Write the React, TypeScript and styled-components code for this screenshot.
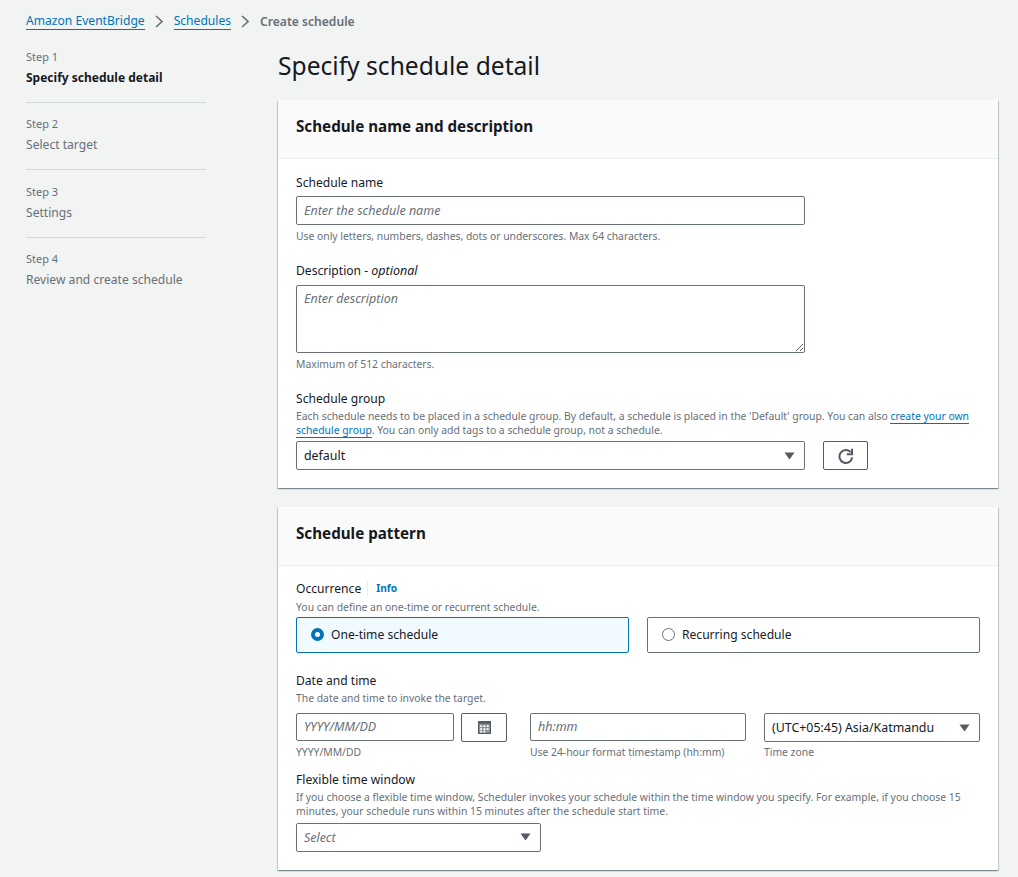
import React from 'react'
import styled, { createGlobalStyle } from 'styled-components'

const GlobalStyle = createGlobalStyle`
  html, body {
    margin: 0;
    padding: 0;
    height: 877px;
    overflow: hidden;
    background: #f2f3f3;
    font-family: "Noto Sans", "Open Sans", sans-serif;
    color: #16191f;
  }
  * { box-sizing: border-box; }
`

const steps = [
  { step: 'Step 1', title: 'Specify schedule detail', active: true },
  { step: 'Step 2', title: 'Select target' },
  { step: 'Step 3', title: 'Settings' },
  { step: 'Step 4', title: 'Review and create schedule' },
]

const calendarCells = [
  [2, 4], [5, 4], [8, 4],
  [2, 6.6], [5, 6.6], [8, 6.6],
  [2, 9], [5, 9],
]

const CaretIcon = () => (
  <svg width="11" height="8" viewBox="0 0 11 8">
    <path d="M0.5 0.5h10L5.5 7.5z" fill="#545b64" />
  </svg>
)

const RefreshIcon = () => (
  <svg width="16" height="16" viewBox="0 0 16 16" fill="none" stroke="#545b64" strokeWidth="2">
    <path d="M14.2 9.4A6.4 6.4 0 1 1 12.6 4.2" />
    <path d="M14 0.8v5.4H8.8" />
  </svg>
)

const CalendarIcon = () => (
  <svg width="13" height="13" viewBox="0 0 12 12">
    <rect x="0.5" y="0.5" width="11" height="11" fill="#879196" stroke="#545b64" />
    <rect x="0" y="0" width="12" height="2.5" fill="#545b64" />
    {calendarCells.map(([x, y]) => (
      <rect key={`${x}-${y}`} x={x} y={y} width="1.8" height="1.6" fill="#fff" />
    ))}
  </svg>
)

const Separator = () => (
  <Chevron viewBox="0 0 8 13" fill="none">
    <path d="M1 1l6 5.5L1 12" stroke="#687078" strokeWidth="1.6" />
  </Chevron>
)

const App = () => {
  return (
    <Page>
      <GlobalStyle />
      <Breadcrumbs>
        <Link>Amazon EventBridge</Link>
        <Separator />
        <Link>Schedules</Link>
        <Separator />
        <Current>Create schedule</Current>
      </Breadcrumbs>
      <Columns>
        <StepNav>
          {steps.map(s => (
            <StepItem key={s.step}>
              <StepLabel>{s.step}</StepLabel>
              <StepTitle $active={s.active}>{s.title}</StepTitle>
            </StepItem>
          ))}
        </StepNav>
        <Main>
          <PageTitle>Specify schedule detail</PageTitle>
          <Panel>
            <PanelHeader>Schedule name and description</PanelHeader>
            <PanelBody>
              <Field $mb={17}>
                <Label $mb={4}>Schedule name</Label>
                <TextInput placeholder="Enter the schedule name" readOnly />
                <Hint>Use only letters, numbers, dashes, dots or underscores. Max 64 characters.</Hint>
              </Field>
              <Field $mb={17}>
                <Label $mb={5}>
                  Description - <em>optional</em>
                </Label>
                <TextArea placeholder="Enter description" readOnly />
                <Hint>Maximum of 512 characters.</Hint>
              </Field>
              <Field>
                <Label>Schedule group</Label>
                <Description>
                  Each schedule needs to be placed in a schedule group. By default, a schedule is placed in the
                  'Default' group. You can also <InlineLink>create your own schedule group</InlineLink>. You can only
                  add tags to a schedule group, not a schedule.
                </Description>
                <SelectRow>
                  <Select $width={509}>
                    default
                    <CaretIcon />
                  </Select>
                  <IconButton $width={45}>
                    <RefreshIcon />
                  </IconButton>
                </SelectRow>
              </Field>
            </PanelBody>
          </Panel>
          <Panel>
            <PanelHeader>Schedule pattern</PanelHeader>
            <PanelBody>
              <Field $mb={17}>
                <LabelRow>
                  <Label>Occurrence</Label>
                  <InfoLink>Info</InfoLink>
                </LabelRow>
                <Description>You can define an one-time or recurrent schedule.</Description>
                <Tiles>
                  <Tile $selected>
                    <Radio $selected />
                    One-time schedule
                  </Tile>
                  <Tile>
                    <Radio />
                    Recurring schedule
                  </Tile>
                </Tiles>
              </Field>
              <Field $mb={10}>
                <Label>Date and time</Label>
                <Description>The date and time to invoke the target.</Description>
                <DateGrid>
                  <div>
                    <DateInputs>
                      <TextInput placeholder="YYYY/MM/DD" readOnly $height={28} />
                      <IconButton $width={46}>
                        <CalendarIcon />
                      </IconButton>
                    </DateInputs>
                    <Hint>YYYY/MM/DD</Hint>
                  </div>
                  <div>
                    <InputSlot>
                      <TextInput placeholder="hh:mm" readOnly $height={28} />
                    </InputSlot>
                    <Hint>Use 24-hour format timestamp (hh:mm)</Hint>
                  </div>
                  <div>
                    <InputSlot>
                      <Select $height={29}>
                        (UTC+05:45) Asia/Katmandu
                        <CaretIcon />
                      </Select>
                    </InputSlot>
                    <Hint>Time zone</Hint>
                  </div>
                </DateGrid>
              </Field>
              <Field>
                <Label>Flexible time window</Label>
                <Description>
                  If you choose a flexible time window, Scheduler invokes your schedule within the time window you
                  specify. For example, if you choose 15 minutes, your schedule runs within 15 minutes after the
                  schedule start time.
                </Description>
                <Select $width={245} $mt={5} $placeholder>
                  Select
                  <CaretIcon />
                </Select>
              </Field>
            </PanelBody>
          </Panel>
        </Main>
      </Columns>
    </Page>
  )
}

export default App

const Page = styled.div`
  width: 1018px;
  height: 877px;
  overflow: hidden;
  padding: 12px 20px 0 26px;
  font-size: 12.1px;
`

const Breadcrumbs = styled.nav`
  display: flex;
  align-items: center;
  height: 18px;
  font-size: 12.1px;
`

const Link = styled.a`
  color: #0073bb;
  border-bottom: 1px solid #0073bb;
  padding-top: 1px;
  line-height: 16px;
`

const Chevron = styled.svg`
  flex: none;
  width: 8px;
  height: 13px;
  margin: 1px 11px 0 10px;
`

const Current = styled.span`
  color: #687078;
  font-weight: 600;
`

const Columns = styled.div`
  display: flex;
  margin-top: 16px;
`

const StepNav = styled.div`
  width: 180px;
  margin-right: 72px;
  padding-top: 3px;
`

const StepItem = styled.div`
  padding-bottom: 13.5px;
  border-bottom: 1px solid #d5dbdb;

  & + & {
    padding-top: 13.4px;
    padding-bottom: 14.3px;
  }

  &:last-child {
    border-bottom: 0;
  }
`

const StepLabel = styled.div`
  font-size: 11px;
  line-height: 15px;
  color: #687078;
`

const StepTitle = styled.div<{ $active?: boolean }>`
  margin-top: 4px;
  font-size: ${p => (p.$active ? 12 : 12.1)}px;
  line-height: 20px;
  font-weight: ${p => (p.$active ? 700 : 400)};
  color: ${p => (p.$active ? '#16191f' : '#687078')};
`

const Main = styled.main`
  width: 720px;
`

const PageTitle = styled.h1`
  margin: 0 0 14px;
  font-size: 24.6px;
  line-height: 40px;
  font-weight: 400;
  color: #16191f;
  height: 40px;
`

const Panel = styled.section`
  background: #fff;
  box-shadow: 0 1px 1px 0 rgba(0, 28, 36, 0.3), 1px 1px 1px 0 rgba(0, 28, 36, 0.15), -1px 1px 1px 0 rgba(0, 28, 36, 0.15);
  margin-bottom: 19px;
`

const PanelHeader = styled.h2`
  margin: 0;
  height: 59px;
  padding: 0 18px 6px;
  display: flex;
  align-items: center;
  background: #fafafa;
  border-bottom: 1px solid #eaeded;
  font-size: 15.2px;
  font-weight: 700;
`

const PanelBody = styled.div`
  padding: 13px 18px 18px;
`

const Field = styled.div<{ $mb?: number }>`
  margin-bottom: ${p => p.$mb ?? 0}px;
`

const Label = styled.div<{ $mb?: number }>`
  font-size: 12.1px;
  line-height: 22px;
  color: #16191f;
  height: 20px;
  margin-bottom: ${p => p.$mb ?? 0}px;

  em {
    font-size: 12.5px;
  }
`

const LabelRow = styled.div`
  display: flex;
  align-items: center;
  margin: -1px 0 2px;
`

const InfoLink = styled.a`
  margin-left: 6px;
  padding-left: 8px;
  border-left: 1px solid #eaeded;
  color: #0073bb;
  font-size: 10.2px;
  font-weight: 700;
  line-height: 15px;
`

const Description = styled.div`
  font-size: 10.38px;
  line-height: 14px;
  color: #687078;
  margin: 1px 0 4px;
`

const InlineLink = styled.a`
  color: #0073bb;
  border-bottom: 1px solid #0073bb;
`

const Hint = styled.div`
  font-size: 10.35px;
  line-height: 14px;
  margin-top: 4px;
  color: #687078;
`

const inputBase = `
  display: block;
  border: 1px solid #687078;
  border-radius: 2px;
  background: #fff;
  padding: 0 7px;
  font-family: "Noto Sans", "Open Sans", sans-serif;
  font-size: 12.5px;
  color: #16191f;
  outline: none;

  &::placeholder {
    color: #687078;
    font-style: italic;
    opacity: 1;
  }
`

const TextInput = styled.input<{ $height?: number }>`
  ${inputBase}
  width: ${p => (p.$height ? '100%' : '509px')};
  min-width: 0;
  height: ${p => p.$height ?? 29}px;
  padding-bottom: ${p => (p.$height ? 2 : 0)}px;
`

const InputSlot = styled.div`
  height: 28px;
`

const TextArea = styled.textarea`
  ${inputBase}
  width: 509px;
  height: 68px;
  padding-top: 4px;
  line-height: 18px;
`

const Select = styled.div<{ $width?: number; $height?: number; $mt?: number; $placeholder?: boolean }>`
  display: flex;
  align-items: center;
  justify-content: space-between;
  width: ${p => (p.$width ? `${p.$width}px` : '100%')};
  height: ${p => p.$height ?? 29}px;
  margin-top: ${p => p.$mt ?? 0}px;
  padding: 0 9px ${p => (p.$placeholder ? 1 : 0)}px 7px;
  border: 1px solid #687078;
  border-radius: 2px;
  background: #fff;
  font-size: 12.4px;
  white-space: nowrap;
  color: ${p => (p.$placeholder ? '#687078' : '#16191f')};
  font-style: ${p => (p.$placeholder ? 'italic' : 'normal')};
`

const SelectRow = styled.div`
  display: flex;
  gap: 18px;
`

const IconButton = styled.button<{ $width: number }>`
  display: flex;
  align-items: center;
  justify-content: center;
  flex: none;
  width: ${p => p.$width}px;
  height: 29px;
  padding: 0;
  border: 1px solid #545b64;
  border-radius: 2px;
  background: #fff;
`

const Tiles = styled.div`
  display: grid;
  grid-template-columns: 333px 333px;
  gap: 18px;
  margin-top: -1px;
`

const Tile = styled.div<{ $selected?: boolean }>`
  display: flex;
  align-items: center;
  gap: 7px;
  height: 36px;
  padding: 0 14px 1px;
  border: 1px solid ${p => (p.$selected ? '#0073bb' : '#687078')};
  border-radius: 2px;
  background: ${p => (p.$selected ? '#f1faff' : '#fff')};
  font-size: 12.1px;
`

const Radio = styled.span<{ $selected?: boolean }>`
  width: 13px;
  height: 13px;
  border-radius: 50%;
  background: #fff;
  border: ${p => (p.$selected ? '4px solid #0073bb' : '1px solid #687078')};
`

const DateGrid = styled.div`
  display: grid;
  grid-template-columns: repeat(3, 216px);
  column-gap: 18px;
  margin-top: 8px;
`

const DateInputs = styled.div`
  display: flex;
  gap: 7px;
  width: 211px;
  height: 28px;
`
